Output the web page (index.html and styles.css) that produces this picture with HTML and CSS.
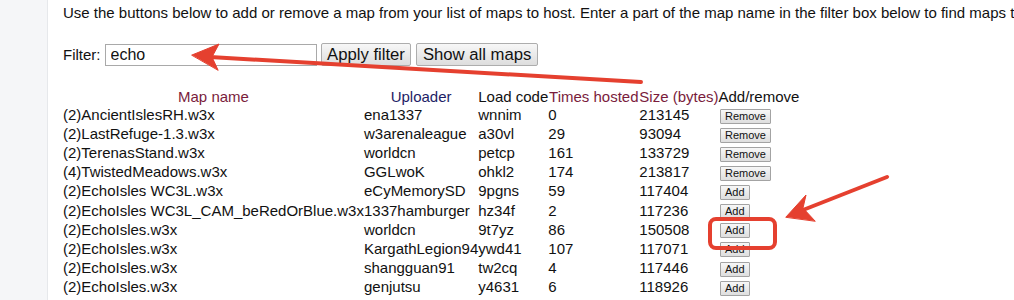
FILE: index.html
```html
<!DOCTYPE html>
<html lang="en">
<head>
    <meta charset="UTF-8">
    <meta name="viewport" content="width=device-width, initial-scale=1.0">
    <title>Host maps</title>
    <link rel="stylesheet" href="styles.css">
</head>
<body>

    <div class="page">
        <div class="sidebar"></div>
        <div class="content">
            <p class="intro">Use the buttons below to add or remove a map from your list of maps to host. Enter a part of the map name in the filter box below to find maps that you want to host.</p>

            <form class="filter">
                <label for="filter">Filter:</label>
                <input type="text" id="filter" value="echo">
                <button type="button" class="big">Apply filter</button>
                <button type="button" class="big">Show all maps</button>
            </form>

            <table class="maps">
                <colgroup>
                    <col>
                    <col>
                    <col>
                    <col class="col-hosted">
                    <col class="col-size">
                    <col>
                </colgroup>
                <tr>
                    <th><a href="#" class="sort">Map name</a></th>
                    <th><a href="#" class="sort blue">Uploader</a></th>
                    <th>Load code</th>
                    <th><a href="#" class="sort">Times hosted</a></th>
                    <th><a href="#" class="sort">Size (bytes)</a></th>
                    <th>Add/remove</th>
                </tr>
                <tr><td>(2)AncientIslesRH.w3x</td><td>ena1337</td><td>wnnim</td><td>0</td><td>213145</td><td><button class="small">Remove</button></td></tr>
                <tr><td>(2)LastRefuge-1.3.w3x</td><td>w3arenaleague</td><td>a30vl</td><td>29</td><td>93094</td><td><button class="small">Remove</button></td></tr>
                <tr><td>(2)TerenasStand.w3x</td><td>worldcn</td><td>petcp</td><td>161</td><td>133729</td><td><button class="small">Remove</button></td></tr>
                <tr><td>(4)TwistedMeadows.w3x</td><td>GGLwoK</td><td>ohkl2</td><td>174</td><td>213817</td><td><button class="small">Remove</button></td></tr>
                <tr><td>(2)EchoIsles WC3L.w3x</td><td>eCyMemorySD</td><td>9pgns</td><td>59</td><td>117404</td><td><button class="small">Add</button></td></tr>
                <tr><td>(2)EchoIsles WC3L_CAM_beRedOrBlue.w3x</td><td>1337hamburger</td><td>hz34f</td><td>2</td><td>117236</td><td><button class="small">Add</button></td></tr>
                <tr><td>(2)EchoIsles.w3x</td><td>worldcn</td><td>9t7yz</td><td>86</td><td>150508</td><td><button class="small">Add</button></td></tr>
                <tr><td>(2)EchoIsles.w3x</td><td>KargathLegion94</td><td>ywd41</td><td>107</td><td>117071</td><td><button class="small">Add</button></td></tr>
                <tr><td>(2)EchoIsles.w3x</td><td>shangguan91</td><td>tw2cq</td><td>4</td><td>117446</td><td><button class="small">Add</button></td></tr>
                <tr><td>(2)EchoIsles.w3x</td><td>genjutsu</td><td>y4631</td><td>6</td><td>118926</td><td><button class="small">Add</button></td></tr>
                <tr><td>(2)EchoIsles.w3x</td><td>yujiesfox</td><td>b58rq</td><td>48</td><td>117438</td><td><button class="small">Add</button></td></tr>
            </table>
        </div>

        <!-- red annotation marks drawn over the page -->
        <svg class="marks" width="1014" height="300" viewBox="0 0 1014 300">
            <g fill="#e5402f" stroke="#e5402f" stroke-linecap="round" stroke-linejoin="round">
                <line x1="641" y1="82" x2="210" y2="57" stroke-width="4"/>
                <polygon points="192,55 219,44 212,57 218,70" stroke-width="1"/>
                <line x1="887" y1="177" x2="803" y2="210" stroke-width="4"/>
                <polygon points="786,217 806,195 803,208 815,221" stroke-width="1"/>
                <rect x="710" y="219" width="65" height="29" rx="6" fill="none" stroke-width="4"/>
            </g>
        </svg>
    </div>

</body>
</html>
```

FILE: styles.css
```css
body {
    margin: 0;
    font-family: "Liberation Sans", Arial, sans-serif;
    font-size: 15px;
    color: #111;
    background: #fff;
    overflow: hidden;
}
.page {
    position: relative;
    display: flex;
    height: 300px;
    overflow: hidden;
}
.sidebar {
    flex: 0 0 47px;
    background: #f5f6f8;
    border-right: 1px solid #e6e8eb;
}
.content {
    flex: 1;
    min-width: 0;
    padding: 4px 0 0 15px;
}
.intro {
    margin: 0;
    line-height: 17px;
    white-space: nowrap;
}
.filter {
    display: flex;
    align-items: center;
    margin-top: 22px;
    height: 23px;
}
.filter label {
    margin-right: 4px;
}
.filter input {
    box-sizing: border-box;
    width: 212px;
    height: 22px;
    margin: 0 4px 0 0;
    padding: 0 5px;
    border: 1px solid #a9a9a9;
    font-family: "Liberation Sans", Arial, sans-serif;
    font-size: 16px;
    color: #111;
}
.big {
    box-sizing: border-box;
    height: 23px;
    margin: 0 5px 0 0;
    padding: 0 5.5px;
    border: 1px solid #adadad;
    border-radius: 2px;
    background: linear-gradient(#f7f7f7, #dddddd);
    font-family: "Liberation Sans", Arial, sans-serif;
    font-size: 16.7px;
    color: #111;
}
.maps {
    margin-top: 21px;
    border-collapse: collapse;
    border-spacing: 0;
}
.col-hosted {
    width: 91px;
}
.col-size {
    width: 79px;
}
.maps th {
    padding: 0;
    height: 18px;
    font-weight: normal;
    line-height: 17px;
    text-align: center;
    white-space: nowrap;
}
.maps td {
    padding: 0;
    height: 19.1px;
    line-height: 17px;
    white-space: nowrap;
}
.sort {
    color: #7a1c3c;
    text-decoration: none;
}
.sort.blue {
    color: #1d1d66;
}
.small {
    box-sizing: border-box;
    height: 15px;
    margin: 2px 0 0 1px;
    padding: 0 4.5px;
    border: 1px solid #a3a3a3;
    border-radius: 1px;
    background: linear-gradient(#f7f7f7, #dedede);
    font-family: "Liberation Sans", Arial, sans-serif;
    font-size: 11px;
    line-height: 13px;
    color: #111;
    vertical-align: middle;
}
.marks {
    position: absolute;
    top: 0;
    left: 0;
    pointer-events: none;
}
```
